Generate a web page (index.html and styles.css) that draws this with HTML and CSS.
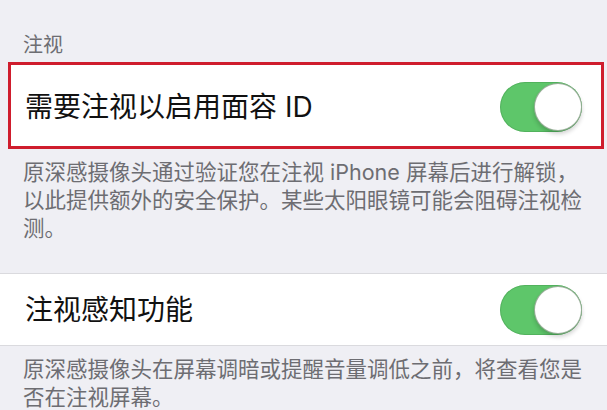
FILE: index.html
```html
<!DOCTYPE html>
<html lang="zh-CN">
<head>
  <meta charset="UTF-8">
  <meta name="viewport" content="width=device-width, initial-scale=1.0">
  <title>面容 ID 与密码</title>
  <link rel="stylesheet" href="styles.css">
</head>
<body>
  <div class="section-header">注视</div>

  <div class="highlight">
    <div class="row">
      <span class="row-title">需要注视以启用面容 ID</span>
      <span class="switch on"><span class="knob"></span></span>
    </div>
  </div>
  <p class="footer">原深感摄像头通过验证您在注视 iPhone 屏幕后进行解锁，<br>以此提供额外的安全保护。某些太阳眼镜可能会阻碍注视检<br>测。</p>

  <div class="row plain">
    <span class="row-title">注视感知功能</span>
    <span class="switch on"><span class="knob"></span></span>
  </div>
  <p class="footer">原深感摄像头在屏幕调暗或提醒音量调低之前，将查看您是<br>否在注视屏幕。</p>
</body>
</html>
```

FILE: styles.css
```css
body {
  margin: 0;
  background-color: #efeff4;
  font-family: Inter, "Noto Sans CJK SC", sans-serif;
  color: #111;
  overflow: hidden;
}
.section-header {
  height: 62px;
  box-sizing: border-box;
  display: flex;
  align-items: flex-end;
  padding: 0 0 4px 23px;
  font-size: 20px;
  line-height: 26px;
  color: #6d6d72;
}
.highlight {
  margin: 0 3px 0 8px;
  border: 3px solid #cf1d2d;
  background-color: #fff;
  padding-top: 3px;
}
.row {
  display: flex;
  align-items: center;
  justify-content: space-between;
  background-color: #fff;
  height: 78px;
  padding: 0 19px 0 14px;
}
.row.plain {
  height: 71px;
  padding: 0 25px 0 25px;
  border-top: 1px solid #dadade;
  border-bottom: 1px solid #dadade;
}
.row-title {
  font-size: 28px;
  line-height: 34px;
}
.switch {
  position: relative;
  width: 82px;
  height: 50px;
  border-radius: 25px;
  background-color: #5ec66a;
  box-shadow: inset 0 0 0 1px rgba(60, 140, 70, 0.35);
}
.knob {
  position: absolute;
  top: 1px;
  right: 0;
  width: 46px;
  height: 46px;
  border-radius: 50%;
  background-color: #fff;
  border: 1px solid rgba(70, 110, 70, 0.55);
  box-shadow: 0 3px 4px rgba(0, 0, 0, 0.18);
}
.footer {
  margin: 0;
  padding: 9px 20px 31px 23px;
  font-size: 21.5px;
  line-height: 28px;
  color: #6d6d72;
}
```
